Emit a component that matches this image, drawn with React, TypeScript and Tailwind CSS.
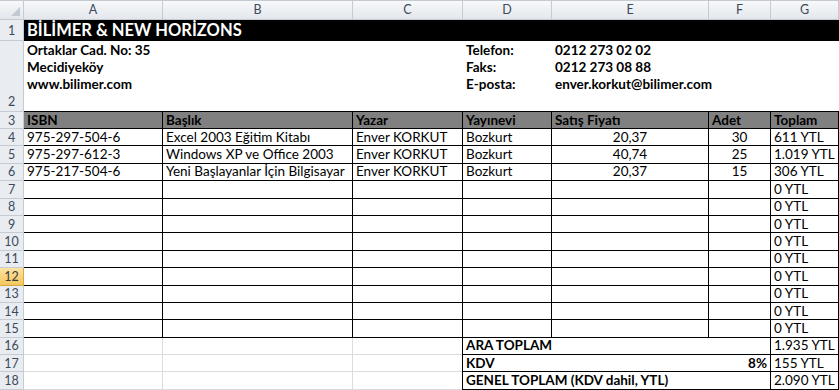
import React from 'react'

const font = { fontFamily: 'Lato, "Open Sans", sans-serif' }

const books = [
  ['975-297-504-6', 'Excel 2003 Eğitim Kitabı', 'Enver KORKUT', 'Bozkurt', '20,37', '30', '611 YTL'],
  ['975-297-612-3', 'Windows XP ve Office 2003', 'Enver KORKUT', 'Bozkurt', '40,74', '25', '1.019 YTL'],
  ['975-217-504-6', 'Yeni Başlayanlar İçin Bilgisayar', 'Enver KORKUT', 'Bozkurt', '20,37', '15', '306 YTL'],
]

function RowNum({ n, active = false, bottom = false }: { n: number; active?: boolean; bottom?: boolean }) {
  return (
    <div
      className={`flex justify-center border-r border-b text-[12.5px] leading-[17px] ${bottom ? 'items-end pb-[1px]' : 'items-center'} ${
        active
          ? 'bg-[linear-gradient(#fbe3a4,#f5c65d)] border-[#d9a93e] text-[#3a3a3a]'
          : 'bg-[#e9ecf0] border-[#c5cbd3] text-[#3c4a5c]'
      }`}
    >
      {n}
    </div>
  )
}

function ColHead({ label }: { label: string }) {
  return (
    <div className="flex items-center justify-center border-r border-b border-[#c5cbd3] bg-[linear-gradient(#f7f8fa,#e3e7ec)] text-[12.5px] text-[#3c4a5c]">
      {label}
    </div>
  )
}

const cell = 'px-[3px] text-[13.5px] leading-[17px] whitespace-nowrap overflow-hidden border-r border-b border-black flex items-center'

export default function App() {
  const rows: React.ReactNode[] = []

  books.forEach((b, i) => {
    rows.push(
      <React.Fragment key={`b${i}`}>
        <RowNum n={i + 4} />
        <div className={cell}>{b[0]}</div>
        <div className={cell}>{b[1]}</div>
        <div className={cell}>{b[2]}</div>
        <div className={cell}>{b[3]}</div>
        <div className={`${cell} justify-center`}>{b[4]}</div>
        <div className={`${cell} justify-center`}>{b[5]}</div>
        <div className={cell}>{b[6]}</div>
      </React.Fragment>
    )
  })

  for (let n = 7; n <= 15; n++) {
    rows.push(
      <React.Fragment key={`e${n}`}>
        <RowNum n={n} active={n === 12} />
        <div className={cell} />
        <div className={cell} />
        <div className={cell} />
        <div className={cell} />
        <div className={cell} />
        <div className={cell} />
        <div className={cell}>0 YTL</div>
      </React.Fragment>
    )
  }

  const grid = 'px-[3px] border-r border-b border-[#dadcdf]'

  return (
    <div className="w-[839px] h-[390px] overflow-hidden bg-white text-black" style={font}>
      <div className="grid grid-cols-[24px_139px_190px_110px_89px_157px_62px_68px] grid-rows-[19px_21px_71px_17px_repeat(15,17.4px)] border-t border-[#c5cbd3]">
        {/* column headers */}
        <div className="relative border-r border-b border-[#c5cbd3] bg-[linear-gradient(#f7f8fa,#e3e7ec)]">
          <svg className="absolute right-[3px] bottom-[3px]" width="9" height="9" viewBox="0 0 9 9">
            <polygon points="9,0 9,9 0,9" fill="#c3c9d1" />
          </svg>
        </div>
        {['A', 'B', 'C', 'D', 'E', 'F', 'G'].map((c) => (
          <ColHead key={c} label={c} />
        ))}

        {/* row 1 */}
        <RowNum n={1} />
        <div className="col-span-7 bg-black text-white font-bold text-[16.5px] leading-[21px] px-[3px] whitespace-nowrap flex items-center">
          BİLİMER &amp; NEW HORİZONS
        </div>

        {/* row 2 */}
        <RowNum n={2} bottom />
        <div className="col-span-3 px-[3px] pt-[1px] font-bold text-[13.5px] leading-[17px] border-b border-black">
          <div>Ortaklar Cad. No: 35</div>
          <div>Mecidiyeköy</div>
          <div>www.bilimer.com</div>
        </div>
        <div className="px-[3px] pt-[1px] font-bold text-[13.5px] leading-[17px] border-b border-black">
          <div>Telefon:</div>
          <div>Faks:</div>
          <div>E-posta:</div>
        </div>
        <div className="col-span-3 px-[3px] pt-[1px] font-bold text-[13.5px] leading-[17px] border-b border-black whitespace-nowrap">
          <div>0212 273 02 02</div>
          <div>0212 273 08 88</div>
          <div>enver.korkut@bilimer.com</div>
        </div>

        {/* row 3 header */}
        <RowNum n={3} />
        {['ISBN', 'Başlık', 'Yazar', 'Yayınevi', 'Satış Fiyatı', 'Adet', 'Toplam'].map((h) => (
          <div key={h} className={`${cell} bg-[#808080] font-bold`}>
            {h}
          </div>
        ))}

        {rows}

        {/* totals */}
        <RowNum n={16} />
        <div className={grid} />
        <div className={grid} />
        <div className={grid} />
        <div className={`${cell} col-span-3 border-l font-bold -ml-px`}>ARA TOPLAM</div>
        <div className={cell}>1.935 YTL</div>

        <RowNum n={17} />
        <div className={grid} />
        <div className={grid} />
        <div className={grid} />
        <div className={`${cell} col-span-3 border-l font-bold justify-between -ml-px`}>
          <span>KDV</span>
          <span>8%</span>
        </div>
        <div className={cell}>155 YTL</div>

        <RowNum n={18} />
        <div className={grid} />
        <div className={grid} />
        <div className={grid} />
        <div className={`${cell} col-span-3 border-l font-bold -ml-px`}>GENEL TOPLAM (KDV dahil, YTL)</div>
        <div className={cell}>2.090 YTL</div>
      </div>
    </div>
  )
}
